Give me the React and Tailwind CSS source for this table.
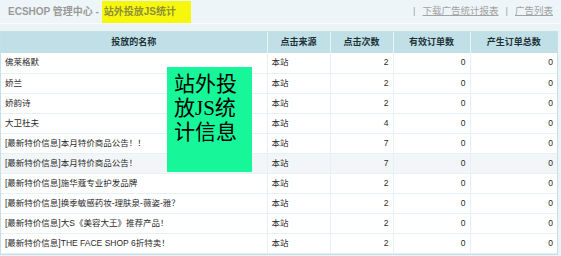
import React from 'react';

const rows = [
  { name: '佛莱格默', clicks: 2 },
  { name: '娇兰', clicks: 2 },
  { name: '娇韵诗', clicks: 2 },
  { name: '大卫杜夫', clicks: 4 },
  { name: '[最新特价信息]本月特价商品公告！！', clicks: 7 },
  { name: '[最新特价信息]本月特价商品公告！', clicks: 7, hover: true },
  { name: '[最新特价信息]施华蔻专业护发品牌', clicks: 2 },
  { name: '[最新特价信息]换季敏感药妆-理肤泉-薇姿-雅？', clicks: 2 },
  { name: '[最新特价信息]大S《美容大王》推荐产品！', clicks: 2 },
  { name: '[最新特价信息]THE FACE SHOP 6折特卖！', clicks: 2 },
];

const cell = 'h-[20px] px-[4px] border-r border-b border-[#e4f1f5] whitespace-nowrap';

export default function App() {
  return (
    <div
      className="relative w-[561px] h-[256px] overflow-hidden bg-[#eaf3f6] text-[8.5px] text-[#2a2a2a]"
      style={{ fontFamily: '"Liberation Sans", "Noto Sans CJK SC", sans-serif' }}
    >
      {/* title bar */}
      <div className="flex items-center justify-between h-[24px] bg-[#eef5f8] border-b border-[#f8fbfc] pl-[8px] pr-[8px]">
        <div className="flex items-center h-full text-[10px] font-bold text-[#9a9a9a]">
          <span>ECSHOP 管理中心 -&nbsp;</span>
          <span className="flex items-center h-[22px] bg-[#f6f70c] pl-[2px] pr-[15px] text-[#8f8f3a]">站外投放JS统计</span>
        </div>
        <div className="flex items-center gap-[7px] text-[9.5px] text-[#a3a3a3]">
          <span>|</span>
          <span className="underline">下载广告统计报表</span>
          <span>|</span>
          <span className="underline">广告列表</span>
        </div>
      </div>

      {/* table */}
      <div className="mt-[7px] mr-[3px] border border-[#c7e0e7] bg-white">
        <table className="w-full border-collapse table-fixed">
          <colgroup>
            <col className="w-[266px]" />
            <col className="w-[63px]" />
            <col className="w-[63px]" />
            <col className="w-[77px]" />
            <col />
          </colgroup>
          <thead>
            <tr className="h-[21px] bg-[#c0dfe7] text-[9px] text-[#1d3338]">
              <th className="border-r border-[#e9f4f7] font-bold">投放的名称</th>
              <th className="border-r border-[#e9f4f7] font-bold">点击来源</th>
              <th className="border-r border-[#e9f4f7] font-bold">点击次数</th>
              <th className="border-r border-[#e9f4f7] font-bold">有效订单数</th>
              <th className="font-bold">产生订单总数</th>
            </tr>
          </thead>
          <tbody>
            {rows.map((r, i) => (
              <tr key={i} className={r.hover ? 'bg-[#f2f6f8]' : 'bg-white'}>
                <td className={`${cell} text-left`}>{r.name}</td>
                <td className={`${cell} text-left`}>本站</td>
                <td className={`${cell} text-right`}>{r.clicks}</td>
                <td className={`${cell} text-right`}>0</td>
                <td className={`${cell} text-right border-r-0`}>0</td>
              </tr>
            ))}
          </tbody>
        </table>
      </div>

      {/* annotation */}
      <div
        className="absolute left-[167px] top-[67px] w-[85px] h-[105px] bg-[#17f79a] pl-[7px] pt-[5px] text-[21px] leading-[24px] text-black"
        style={{ fontFamily: '"Liberation Serif", "Noto Sans CJK SC", serif' }}
      >
        站外投
        <br />
        放JS统
        <br />
        计信息
      </div>
    </div>
  );
}
